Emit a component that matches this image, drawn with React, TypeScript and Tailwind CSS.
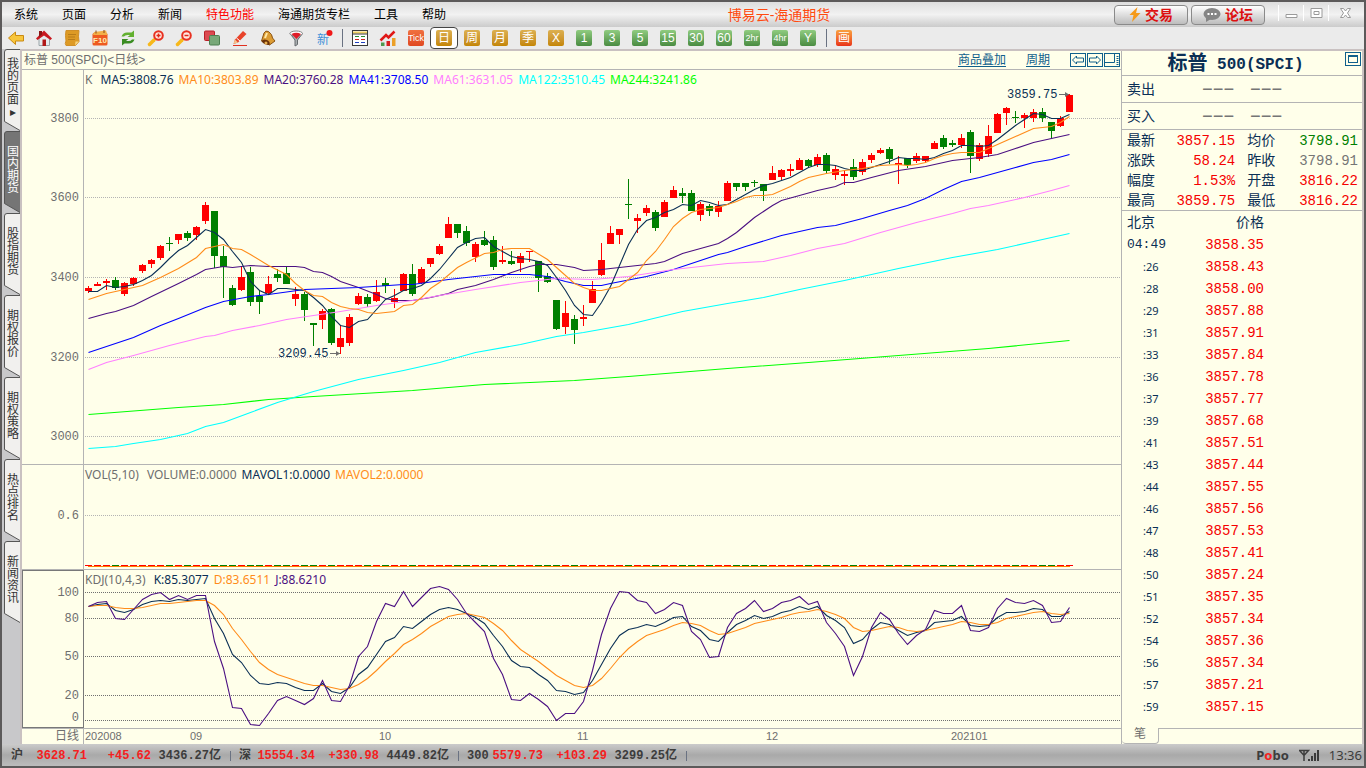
import type { ReactNode } from "react";

/* Horizontal step between two bars and the centre of the first one. */
const STEP = 9;
const FIRST = 4;

const GRAY = "#6e6e6e";
const NAVY = "#0a2f55";
const ORANGE = "#ff8c1a";
const INDIGO = "#4b1082";

type Candle = [high: number, low: number, top: number, bottom: number, up: 0 | 1];
type Point = [index: number, y: number];
type Line = { color: string; points: Point[] };

const candles: Candle[] = [
    [286, 293, 288, 291, 1], [282, 286, 284, 286, 1], [279, 290, 281, 283, 1], [277, 290, 280, 288, 0], [282, 296, 283, 294, 1],
    [277, 286, 278, 284, 1], [264, 273, 265, 271, 1], [259, 268, 260, 264, 1], [245, 260, 246, 258, 1], [237, 251, 243, 244, 0],
    [234, 244, 234, 240, 1], [231, 241, 233, 238, 0], [226, 240, 227, 235, 1], [202, 224, 205, 221, 1], [211, 268, 211, 256, 0],
    [246, 298, 256, 267, 0], [285, 306, 288, 305, 0], [267, 291, 277, 290, 1], [267, 306, 272, 302, 0], [290, 314, 296, 302, 0],
    [276, 294, 284, 293, 1], [269, 282, 274, 278, 0], [266, 284, 273, 284, 0], [287, 306, 294, 299, 1], [292, 321, 294, 310, 0],
    [323, 346, 323, 325, 0], [309, 329, 311, 320, 1], [308, 345, 309, 343, 0], [325, 354, 338, 347, 1], [314, 346, 317, 343, 1],
    [293, 305, 296, 304, 1], [294, 307, 297, 304, 0], [280, 302, 292, 301, 1], [278, 293, 283, 286, 0], [289, 308, 298, 302, 1],
    [273, 291, 274, 291, 1], [264, 296, 274, 294, 0], [267, 284, 269, 283, 1], [258, 267, 258, 264, 1], [244, 255, 246, 254, 1],
    [217, 238, 224, 238, 1], [224, 238, 224, 233, 0], [226, 246, 231, 243, 0], [242, 262, 244, 257, 1], [231, 246, 240, 245, 0],
    [236, 270, 240, 267, 0], [246, 264, 260, 262, 1], [251, 265, 261, 264, 0], [253, 272, 256, 263, 1], [251, 262, 251, 252, 1],
    [261, 292, 261, 278, 0], [273, 283, 276, 282, 0], [300, 330, 300, 329, 0], [301, 334, 313, 327, 1], [315, 344, 319, 330, 0],
    [305, 326, 317, 319, 1], [281, 303, 289, 303, 1], [243, 276, 260, 275, 1], [226, 244, 233, 244, 1], [229, 244, 229, 235, 1],
    [179, 219, 204, 205, 0], [214, 233, 218, 221, 1], [205, 216, 208, 213, 1], [210, 231, 212, 228, 0], [200, 217, 202, 217, 1],
    [186, 198, 190, 198, 1], [188, 203, 193, 196, 0], [190, 211, 193, 211, 0], [202, 221, 204, 215, 1], [204, 216, 206, 211, 0],
    [201, 217, 206, 212, 1], [181, 201, 183, 201, 1], [183, 191, 183, 187, 0], [183, 191, 183, 187, 0], [180, 187, 182, 183, 0],
    [184, 201, 184, 191, 0], [166, 180, 173, 180, 1], [169, 180, 170, 177, 1], [164, 176, 169, 171, 1], [158, 170, 160, 170, 1],
    [159, 168, 160, 166, 0], [154, 167, 157, 165, 1], [153, 174, 155, 171, 0], [166, 180, 169, 175, 1], [171, 185, 174, 176, 1],
    [159, 180, 167, 177, 0], [159, 175, 162, 172, 1], [153, 163, 155, 160, 1], [148, 154, 150, 153, 1], [147, 164, 149, 159, 0],
    [156, 184, 163, 165, 1], [158, 168, 158, 165, 0], [153, 163, 156, 161, 1], [156, 163, 156, 161, 1], [141, 149, 143, 149, 1],
    [135, 149, 138, 147, 0], [140, 147, 143, 145, 0], [134, 148, 138, 145, 1], [130, 173, 132, 156, 0], [143, 161, 145, 159, 1],
    [125, 157, 136, 154, 1], [113, 133, 114, 133, 1], [107, 125, 108, 113, 1], [111, 123, 117, 118, 0], [113, 128, 115, 118, 1],
    [109, 122, 112, 118, 1], [108, 122, 112, 118, 0], [122, 138, 122, 131, 0], [116, 127, 118, 126, 1], [94, 112, 95, 112, 1],
];

/** Turns a plain list of values, one for each bar, into points. */
const dense = (values: number[]): Point[] => values.map((y, i) => [i, y]);

const ma5 = dense([
    291, 291, 285, 287, 286, 284, 280, 275, 267, 258, 250, 245, 237, 229, 232, 239, 251, 262, 281, 290, 294, 288, 288, 289, 290, 297, 305, 316,
    325, 327, 321, 319, 309, 299, 295, 290, 288, 285, 278, 269, 258, 247, 242, 238, 237, 246, 251, 256, 258, 259, 261, 265, 277, 290, 305, 314,
    315, 302, 286, 265, 244, 229, 220, 217, 212, 209, 204, 205, 200, 202, 205, 204, 199, 194, 189, 185, 183, 180, 177, 172, 167, 164, 164, 165,
    168, 170, 170, 167, 164, 161, 157, 158, 158, 159, 157, 153, 150, 145, 145, 146, 145, 139, 132, 125, 119, 113, 114, 118, 118, 114,
]);

const averages: Line[] = [
    {
        color: "#00ff00",
        points: [[0, 414], [10, 407], [15, 404], [20, 399], [25, 396], [36, 390], [44, 384], [54, 380], [60, 376], [71, 368], [80, 362], [90, 355], [100, 348], [109, 340]],
    },
    {
        color: "#00ffff",
        points: [
            [0, 448], [3, 446], [5, 443], [8, 439], [11, 433], [13, 426], [15, 422], [18, 412], [21, 402], [25, 391], [30, 379], [35, 370], [36, 368], [39, 362],
            [43, 352], [48, 344], [52, 336], [55, 332], [60, 324], [66, 311], [71, 303], [75, 297], [79, 289], [84, 280], [90, 268], [96, 257], [101, 249], [105, 241], [109, 233],
        ],
    },
    {
        color: INDIGO,
        points: [
            [0, 318], [2, 313], [3, 311], [5, 305], [7, 296], [10, 283], [12, 274], [13, 269], [15, 266], [16, 267], [18, 265], [20, 266], [23, 266], [24, 267],
            [25, 271], [26, 272], [27, 276], [28, 281], [30, 287], [32, 294], [33, 298], [34, 300], [36, 300], [38, 297], [40, 293], [41, 289], [43, 285], [45, 279],
            [47, 272], [49, 266], [50, 264], [52, 264], [54, 267], [55, 270], [57, 269], [60, 266], [62, 264], [63, 263], [64, 261], [66, 253], [68, 248], [70, 243],
            [71, 238], [72, 232], [74, 217], [76, 205], [77, 200], [79, 195], [81, 190], [83, 186], [84, 182], [85, 182], [87, 177], [90, 170], [93, 166], [96, 160],
            [99, 157], [101, 154], [103, 148], [105, 142], [107, 138], [109, 134],
        ],
    },
    {
        color: "#0000ff",
        points: [
            [0, 352], [2, 346], [5, 337], [8, 325], [10, 318], [13, 307], [15, 301], [18, 296], [20, 294], [24, 289], [30, 287], [35, 284], [36, 284], [40, 279],
            [45, 274], [49, 274], [51, 276], [53, 281], [55, 285], [57, 285], [58, 283], [62, 276], [65, 269], [67, 263], [70, 254], [71, 252], [73, 246], [77, 235],
            [81, 227], [83, 225], [86, 218], [89, 210], [91, 205], [93, 198], [95, 189], [97, 181], [99, 177], [101, 172], [103, 167], [105, 162], [107, 159], [109, 154],
        ],
    },
    {
        color: "#ff80ff",
        points: [
            [0, 369], [2, 362], [5, 355], [9, 345], [13, 336], [14, 335], [16, 330], [19, 325], [22, 319], [25, 315], [28, 311], [32, 305], [36, 300], [39, 295],
            [43, 289], [48, 282], [52, 278], [56, 279], [60, 276], [65, 269], [68, 266], [71, 263], [75, 261], [78, 255], [81, 248], [84, 243], [88, 232], [92, 222],
            [96, 213], [98, 208], [100, 205], [104, 197], [107, 190], [109, 185],
        ],
    },
    { color: NAVY, points: ma5 },
    {
        color: ORANGE,
        points: [
            [0, 299], [2, 293], [4, 289], [6, 285], [8, 277], [10, 268], [12, 257], [13, 248], [14, 246], [15, 244], [16, 248], [17, 249], [18, 254], [20, 265],
            [22, 274], [23, 283], [24, 290], [25, 295], [26, 296], [27, 302], [28, 306], [29, 308], [30, 309], [31, 312], [32, 313], [34, 311], [35, 305], [36, 304],
            [37, 297], [38, 288], [39, 282], [41, 267], [42, 262], [44, 253], [45, 252], [46, 249], [47, 248], [49, 248], [51, 259], [52, 267], [53, 275], [54, 283],
            [55, 287], [56, 290], [57, 290], [59, 286], [60, 279], [61, 272], [62, 260], [63, 251], [64, 239], [65, 226], [66, 218], [67, 212], [68, 209], [69, 208],
            [70, 207], [71, 204], [72, 201], [73, 197], [74, 195], [75, 195], [76, 194], [77, 190], [78, 186], [79, 181], [80, 177], [82, 173], [84, 170], [86, 168],
            [88, 165], [90, 164], [91, 165], [92, 164], [93, 162], [94, 158], [95, 155], [96, 153], [97, 152], [99, 152], [100, 148], [101, 144], [103, 136], [105, 128],
            [107, 126], [108, 122], [109, 116],
        ],
    },
];

const kdj: Line[] = [
    {
        color: NAVY,
        points: dense([
            606, 604, 603, 610, 612, 609, 604, 601, 600, 601, 599, 600, 599, 598, 618, 633, 654, 662, 675, 683, 684, 682, 683, 687, 690, 690, 683, 691,
            693, 687, 674, 667, 654, 641, 637, 626, 628, 621, 614, 609, 607, 609, 613, 617, 623, 635, 646, 660, 666, 667, 674, 680, 690, 691, 694, 692,
            680, 664, 648, 635, 629, 627, 624, 626, 622, 617, 616, 626, 630, 639, 641, 632, 624, 620, 615, 618, 616, 612, 610, 606, 609, 606, 615, 620,
            627, 643, 639, 629, 622, 624, 630, 635, 632, 630, 622, 621, 620, 616, 625, 626, 625, 617, 612, 612, 611, 608, 609, 616, 616, 611,
        ]),
    },
    {
        color: ORANGE,
        points: dense([
            606, 605, 605, 607, 608, 608, 607, 605, 603, 603, 602, 601, 600, 600, 605, 614, 628, 639, 651, 662, 669, 674, 677, 680, 683, 685, 685, 687,
            689, 688, 684, 678, 670, 661, 653, 644, 639, 633, 626, 621, 616, 614, 613, 615, 617, 623, 630, 640, 649, 655, 661, 668, 675, 680, 685, 687,
            685, 678, 668, 657, 648, 641, 635, 632, 629, 625, 622, 623, 625, 630, 634, 633, 630, 627, 623, 621, 619, 617, 614, 612, 611, 609, 611, 614,
            618, 627, 631, 630, 628, 626, 627, 630, 631, 630, 628, 626, 624, 621, 622, 624, 624, 622, 618, 616, 614, 612, 611, 613, 614, 613,
        ]),
    },
    {
        color: INDIGO,
        points: dense([
            606, 602, 601, 618, 619, 609, 599, 594, 592, 599, 595, 599, 595, 595, 641, 668, 707, 708, 724, 725, 713, 700, 696, 700, 704, 698, 680, 700,
            701, 685, 656, 646, 621, 603, 606, 591, 606, 597, 588, 586, 589, 599, 613, 622, 631, 658, 674, 699, 700, 693, 699, 706, 720, 713, 713, 701,
            670, 634, 608, 591, 592, 600, 602, 613, 609, 602, 605, 631, 639, 657, 656, 627, 613, 608, 600, 611, 608, 602, 600, 596, 604, 601, 622, 633,
            646, 675, 656, 627, 612, 619, 633, 644, 635, 629, 610, 613, 613, 605, 630, 631, 627, 608, 598, 602, 603, 600, 605, 622, 621, 607,
        ]),
    },
];

const ticks = [
    ["04:49", "3858.35"], [":26", "3858.43"], [":28", "3858.00"], [":29", "3857.88"], [":31", "3857.91"], [":33", "3857.84"],
    [":36", "3857.78"], [":37", "3857.77"], [":39", "3857.68"], [":41", "3857.51"], [":43", "3857.44"], [":44", "3857.55"],
    [":46", "3857.56"], [":47", "3857.53"], [":48", "3857.41"], [":50", "3857.24"], [":51", "3857.35"], [":52", "3857.34"],
    [":54", "3857.36"], [":56", "3857.34"], [":57", "3857.21"], [":59", "3857.15"],
];

const quotes = [
    ["最新", "3857.15", "均价", "3798.91", "text-[#008000]"],
    ["涨跌", "58.24", "昨收", "3798.91", "text-[#757575]"],
    ["幅度", "1.53%", "开盘", "3816.22", "text-[#f50000]"],
    ["最高", "3859.75", "最低", "3816.22", "text-[#f50000]"],
];

const mono = "font-['Liberation_Mono','Noto_Sans_CJK_SC',monospace]";
const label = "font-['Noto_Sans','Noto_Sans_CJK_SC',sans-serif]";

/* ---------- charts ---------- */

function GridLine({ y, color = "#b4b4b4" }: { y: number; color?: string }) {
    return <line x1="1" x2="100%" y1={y + 0.5} y2={y + 0.5} stroke={color} strokeDasharray="1 1" shapeRendering="crispEdges" />;
}

function Curves({ lines }: { lines: Line[] }) {
    return (
        <>
            {lines.map((line, i) => (
                <polyline
                    key={i}
                    fill="none"
                    stroke={line.color}
                    strokeWidth="1.1"
                    points={line.points.map(([index, y]) => `${FIRST + index * STEP + 0.5},${y + 0.5}`).join(" ")}
                />
            ))}
        </>
    );
}

/** Text mark with a small arrow that points at a bar's high or low. */
function Mark({ x, y, text }: { x: number; y: number; text: string }) {
    return (
        <g>
            <text x={x} y={y + 4} fill={NAVY} className={`${mono} text-[12px]`}>{text}</text>
            <path d={`M${x + 52} ${y + 0.5}h10`} stroke={GRAY} />
            <path d={`M${x + 58} ${y - 2}l4 2.5l-4 2.5z`} fill={GRAY} />
        </g>
    );
}

type PaneProps = {
    axis: [text: string, y: number][];
    framed?: boolean;
    legend: [text: string, color: string][];
    height: string;
    children: ReactNode;
};

/** One chart row: value axis on the left, legend and plot on the right. */
function Pane({ axis, framed, legend, height, children }: PaneProps) {
    return (
        <div className="flex border-b border-[#b4b4b4]">
            <div className={`w-[62px] shrink-0 ${framed ? "outline-1 -outline-offset-1 outline-[#787878]" : "border-r border-[#b4b4b4]"}`}>
                <svg className="block h-5 w-full overflow-visible">
                    {axis.map(([text, y]) => (
                        <text key={text} x="57" y={y + 4} textAnchor="end" fill={GRAY} className={`${mono} text-[12px]`}>{text}</text>
                    ))}
                </svg>
            </div>
            <div className="min-w-0 flex-1">
                <div className={`flex h-5 items-center gap-[5px] whitespace-pre pl-px text-xs ${label}`}>
                    {legend.map(([text, color]) => (
                        <span key={text} style={{ color }}>{text}</span>
                    ))}
                </div>
                <svg className={`block w-full overflow-visible ${height}`}>{children}</svg>
            </div>
        </div>
    );
}

function ChartArea() {
    return (
        <div className="min-w-0 flex-1 border-r border-[#b4b4b4]">
            <div className="flex h-[19px] items-center border-b border-[#b4b4b4] pl-0.5 text-xs text-[#6e6e6e]">
                <h2 className="flex-1">标普 500(SPCI)&lt;日线&gt;</h2>
                <a href="#overlay" className="text-[#10608c] underline underline-offset-2">商品叠加</a>
                <a href="#period" className="ml-5 text-[#10608c] underline underline-offset-2">周期</a>
                <div className="ml-5 flex gap-px pr-px">
                    <button aria-label="上一个"><BoxIcon d="M2.500 7l4-4v2h7v4h-7v2z" /></button>
                    <button aria-label="下一个"><BoxIcon d="M13.500 7l-4-4v2h-7v4h7v2z" /></button>
                    <button aria-label="布局"><BoxIcon d="M1 9.500H10.500V1M12.500 3.500h2M12.500 5.500h2M12.500 7.500h2M12.500 9.500h2M12.500 11.500h2" /></button>
                </div>
            </div>

            {/* Candles and moving averages */}
            <Pane
                axis={[["3800", 48], ["3600", 127], ["3400", 207], ["3200", 287], ["3000", 366]]}
                legend={[
                    ["K ", GRAY], ["MA5:3808.76", NAVY], ["MA10:3803.89", ORANGE], ["MA20:3760.28", INDIGO], ["MA41:3708.50", "#0000ff"],
                    ["MA61:3631.05", "#ff80ff"], ["MA122:3510.45", "#00ffff"], ["MA244:3241.86", "#00ff00"],
                ]}
                height="h-[374px]"
            >
                <g transform="translate(0 -90)">
                    {[118, 197, 277, 357, 436].map((y) => <GridLine key={y} y={y} />)}
                    {candles.map(([high, low, top, bottom, up], i) => (
                        <g key={i} fill={up ? "#ff0000" : "#008000"} shapeRendering="crispEdges">
                            <rect x={FIRST + i * STEP} y={high} width="1" height={low - high} />
                            <rect x={FIRST + i * STEP - 3} y={top} width="7" height={bottom - top} />
                        </g>
                    ))}
                    <Curves lines={averages} />
                    <Mark x={194} y={353} text="3209.45" />
                    <Mark x={923} y={94} text="3859.75" />
                </g>
            </Pane>

            {/* Volume */}
            <Pane
                axis={[["0.6", 50]]}
                legend={[["VOL(5,10) ", GRAY], ["VOLUME:0.0000", GRAY], ["MAVOL1:0.0000", NAVY], ["MAVOL2:0.0000", ORANGE]]}
                height="h-[84px]"
            >
                <GridLine y={30} />
                {candles.map((c, i) => (
                    <rect key={i} x={FIRST + i * STEP - 3} y="80" width="7" height="1" fill={c[4] ? "#ff0000" : "#008000"} />
                ))}
                <rect x="4" y="81" width="982" height="1" fill="#ff8000" />
            </Pane>

            {/* KDJ */}
            <Pane
                framed
                axis={[["100", 22], ["80", 48], ["50", 86], ["20", 125], ["0", 147]]}
                legend={[["KDJ(10,4,3) ", GRAY], ["K:85.3077", NAVY], ["D:83.6511", ORANGE], ["J:88.6210", INDIGO]]}
                height="h-[138px]"
            >
                <g transform="translate(0 -590)">
                    {[592, 618, 656, 695, 720].map((y) => <GridLine key={y} y={y} color="#707070" />)}
                    <Curves lines={kdj} />
                </g>
            </Pane>

            {/* Time axis */}
            <div className="flex h-[15px] text-xs leading-[15px] text-[#6e6e6e]">
                <div className="w-[62px] border-r border-[#b4b4b4] pr-1 text-right">日线</div>
                <svg className="h-full flex-1 text-[11px]" fill={GRAY}>
                    <text x="1" y="11">202008</text>
                    <text x="106" y="11">09</text>
                    <text x="295" y="11">10</text>
                    <text x="493" y="11">11</text>
                    <text x="682" y="11">12</text>
                    <text x="867" y="11">202101</text>
                </svg>
            </div>
        </div>
    );
}

function BoxIcon({ d }: { d: string }) {
    return (
        <svg width="16" height="14" viewBox="0 0 16 14" fill="none" stroke="#10608c" className="block">
            <rect x="0.5" y="0.5" width="15" height="13" />
            <path d={d} />
        </svg>
    );
}

/* ---------- side panel ---------- */

function QuotePanel() {
    return (
        <aside className={`flex w-60 shrink-0 flex-col text-sm text-[#0a2f55] ${mono}`}>
            <div className="flex h-[25px] border-b border-[#b4b4b4]">
                <h1 className="flex flex-1 items-center justify-center whitespace-pre pt-1 pl-1 font-bold">
                    <span className="text-xl leading-5">标普</span>
                    <span className="text-base leading-5"> 500(SPCI)</span>
                </h1>
                <button aria-label="最大化面板" className="mr-px mt-px self-start">
                    <svg width="16" height="14" viewBox="0 0 16 14" fill="none" stroke="#10608c" className="block">
                        <rect x="0.5" y="0.5" width="15" height="13" />
                        <rect x="3.5" y="3.5" width="9" height="7" />
                        <path d="M3 4.500h10" />
                    </svg>
                </button>
            </div>
            {["卖出", "买入"].map((side) => (
                <div key={side} className="flex h-[27px] items-center border-b border-[#b4b4b4] pt-0.5 pl-[5px]">
                    <span className="w-[75px]">{side}</span>
                    <span className="w-12 text-lg text-[#757575]">−−−</span>
                    <span className="text-lg text-[#757575]">−−−</span>
                </div>
            ))}
            <table className="w-full border-b border-[#b4b4b4]">
                <tbody>
                    {quotes.map(([a, av, b, bv, tone]) => (
                        <tr key={a} className="h-5 leading-[18px]">
                            <th scope="row" className="pt-0.5 pl-[5px] text-left font-normal">{a}</th>
                            <td className="pt-0.5 text-right text-[#f50000]">{av}</td>
                            <th scope="row" className="pt-0.5 pl-3 text-left font-normal">{b}</th>
                            <td className={`pt-0.5 pr-1 text-right ${tone}`}>{bv}</td>
                        </tr>
                    ))}
                </tbody>
            </table>
            <table className="w-full">
                <thead>
                    <tr className="h-[23px]">
                        <th className="w-10 pl-[5px] text-left font-normal whitespace-nowrap">北京</th>
                        <th className="pr-[98px] text-right font-normal">价格</th>
                    </tr>
                </thead>
                <tbody>
                    {ticks.map(([time, price], i) => (
                        <tr key={time} className="h-[22px] leading-[22px]">
                            <td className={i === 0 ? "pl-[5px] text-[13px]" : `pl-[21px] text-[11px] ${label}`}>{time}</td>
                            <td className="pr-[98px] text-right text-[#f50000]">{price}</td>
                        </tr>
                    ))}
                </tbody>
            </table>
            <div className="mt-auto flex h-4 text-xs leading-[15px] text-[#6e6e6e]">
                <button className="w-[37px] rounded-b-sm border-r border-b border-[#b4b4b4]">笔</button>
                <div className="flex-1 border-t border-[#b4b4b4]" />
            </div>
        </aside>
    );
}

/* ---------- left tabs ---------- */

const pages = ["我的页面▸", "国内期货", "股指期货", "期权报价", "期权策略", "热点排名", "新闻资讯"];

function PageTabs() {
    return (
        <nav className="w-[18px] shrink-0 bg-[#c8c8ca]">
            {pages.map((page, i) => (
                <button key={page} className={`relative block h-[82px] w-full text-xs leading-[12px] ${i === 1 ? "text-white" : "text-[#333]"}`}>
                    <svg width="18" height="82" className="absolute inset-0" fill={i === 1 ? "#757575" : "#f1f0ee"} stroke="#555">
                        <path d="M18 0.500H5Q2.500 0.500 2.500 3V72.500L18 81.500" />
                    </svg>
                    <span className="relative flex flex-col items-center pb-1 pl-1">
                        {[...page].map((char) => <span key={char}>{char}</span>)}
                    </span>
                </button>
            ))}
        </nav>
    );
}

/* ---------- toolbar ---------- */

const tools: [string, ReactNode][] = [
    ["后退", <path d="M0.500 8L7.500 2v3.500h8v5.500h-8V14.500z" fill="#f8c63c" stroke="#c98a12" />],
    ["主页", <><path d="M3 8v7.500h10.500V8L8 3z" fill="#e4eaec" stroke="#9aa5a8" /><path d="M0 8.500L8 0.500l8 8-1.500 1.500L8 5.500 1.500 10z" fill="#c81820" /><path d="M3 1h3v3.500L3 7z" fill="#8a1414" /><path d="M6.500 9.500H10V16H6.500z" fill="#b01818" /></>],
    ["公告", <><path d="M2 0.500h13q-1 6 0 11l-3.500 4H2q-1.500-2 0-4.500q-1-6 0-10.500z" fill="#dd9a25" stroke="#d08f28" /><path d="M4 4.500h8M4 7h7M4 9.500h7" stroke="#b87c1a" /><path d="M11 15.500l0.500-4h3.500z" fill="#f8d580" /></>],
    ["F10", <><rect x="0.500" y="3" width="15" height="12.500" rx="1.500" fill="#ee5a20" /><path d="M1 5l1-3 12-1.500 1.500 4.500z" fill="#f2b048" /><path d="M4 0.500v3M12 0v3" stroke="#8a4a18" /><text x="8" y="13" textAnchor="middle" fontSize="8" fontWeight="bold" fill="#ffe9b0">F10</text></>],
    ["刷新", <><path d="M1.500 6.500Q3 2.500 7 2.500h4.500L14 0.500v6.500H7.500L10 5H7.500Q5 5 4 6.500z" fill="#62b030" /><path d="M14.500 9.500Q13 13.500 9 13.500H4.500L2 15.500V9h6.500L6 11h2.500q2.500 0 3.500-1.500z" fill="#3a8c22" /></>],
    ["放大", <><path d="M1.500 14.500L6 10" stroke="#f7b81a" strokeWidth="3.500" strokeLinecap="round" /><circle cx="10.500" cy="5.500" r="4.300" fill="#ffe8e0" stroke="#e83020" strokeWidth="2" /><path d="M8.500 5.500h4M10.500 3.500v4" stroke="#e02818" strokeWidth="1.500" /></>],
    ["缩小", <><path d="M1.500 14.500L6 10" stroke="#f7b81a" strokeWidth="3.500" strokeLinecap="round" /><circle cx="10.500" cy="5.500" r="4.300" fill="#ffe8e0" stroke="#e83020" strokeWidth="2" /><path d="M8.500 5.500h4" stroke="#e02818" strokeWidth="1.500" /></>],
    ["叠加", <><rect x="0.500" y="1" width="10" height="9.500" rx="1" fill="#dc4a50" stroke="#b82028" /><rect x="5.500" y="5.500" width="10" height="9.500" rx="1" fill="#78a878" stroke="#4d8050" /></>],
    ["画线", <><path d="M1 15.500h14" stroke="#e03020" /><path d="M1.500 14l1.500-4.500L11 1l3.500 3-8.500 8.500z" fill="#e8432a" /><path d="M1.500 14l1.500-4.500 3 3z" fill="#f3c38a" /><path d="M4.500 8l3.500 3" stroke="#fff" /></>],
    ["预警", <><path d="M1.500 11L4 3Q5.500 0 8.500 1.500q4 3 4 6.500l2.500 3-5.500 4z" fill="#dc9c34" stroke="#8a5414" /><path d="M1.500 11q2-2.500 5.500-1t2.500 5q-6 0-8-4z" fill="#6b3208" /><path d="M5 8l2-5" stroke="#ffe9a8" strokeWidth="2" /><circle cx="6" cy="13" r="1.500" fill="#e8b050" /></>],
    ["筛选", <><path d="M2 3.500L7 10v6l2.500-1.500V10L14.500 3.500z" fill="#a9aeb0" stroke="#666b6e" /><ellipse cx="8.200" cy="3.500" rx="6.300" ry="2.500" fill="#fff" stroke="#888" /><path d="M3.500 4q4.700-2.500 9.500 0L8.500 9z" fill="#e01c28" /></>],
    ["新", <><text x="7" y="13.500" textAnchor="middle" fontSize="12" fill="#4090d8">新</text><circle cx="13.500" cy="3" r="3" fill="#f01818" /></>],
];

const views: [string, ReactNode][] = [
    ["报价", <><rect x="0.500" y="0.500" width="15" height="15" fill="#fff" stroke="#3a3a3a" /><path d="M1 2.500h14" stroke="#f0d060" strokeWidth="2" /><path d="M1 4h14" stroke="#3a3a3a" /><path d="M3 6.500h4M9 6.500h4" stroke="#2c8c2c" /><path d="M3 9.500h4M9 9.500h4" stroke="#d02020" /><path d="M3 12.500h4M9 12.500h4" stroke="#2040c0" /></>],
    ["走势", <><path d="M1 16v-3.500h3.500V16z" fill="#4e9a4e" /><path d="M6.500 16v-5H10v5z" fill="#d82020" /><path d="M12 16V8h3.500v8z" fill="#eca028" /><path d="M0.500 10.500L6 5l2.500 2.500 6-6" fill="none" stroke="#e01818" strokeWidth="2.500" /></>],
];

const periods = ["日", "周", "月", "季", "X", "1", "3", "5", "15", "30", "60", "2hr", "4hr", "Y"];

function ToolButton({ name, children }: { name: string; children: ReactNode }) {
    return (
        <button aria-label={name} className="flex h-[22px] w-7 items-center justify-center">
            <svg width="16" height="16" viewBox="0 0 16 16" fill="none" className="overflow-visible">{children}</svg>
        </button>
    );
}

function Badge({ text, tone }: { text: string; tone: string }) {
    return (
        <span className={`flex size-4 items-center justify-center rounded-xs bg-linear-to-b leading-4 text-white ${tone} ${text.length > 2 ? "text-[9px]" : "text-xs"}`}>
            {text}
        </span>
    );
}

function Separator() {
    return <span className="flex w-2 justify-center"><span className="h-[18px] w-px bg-gray-500" /></span>;
}

function Toolbar() {
    return (
        <div className="flex h-[22px] items-center bg-[#ebebeb]">
            {tools.map(([name, icon]) => <ToolButton key={name} name={name}>{icon}</ToolButton>)}
            <Separator />
            {views.map(([name, icon]) => <ToolButton key={name} name={name}>{icon}</ToolButton>)}
            <button className="flex h-[22px] w-7 items-center justify-center"><Badge text="Tick" tone="from-[#f07040] to-[#e04820]" /></button>
            {periods.map((period, i) => (
                <button
                    key={period}
                    className={`flex h-[22px] w-7 items-center justify-center ${i === 0 ? "rounded-sm border border-[#444] bg-white" : ""}`}
                >
                    <Badge text={period} tone={i < 5 ? "from-[#dcb050] to-[#c48600]" : "from-[#90cc80] to-[#4a8c42]"} />
                </button>
            ))}
            <Separator />
            <button className="flex h-[22px] w-7 items-center justify-center"><Badge text="画" tone="from-[#f8a040] to-[#e83018]" /></button>
        </div>
    );
}

/* ---------- title bar ---------- */

const menus = ["系统", "页面", "分析", "新闻", "特色功能", "海通期货专栏", "工具", "帮助"];

function TitleBar() {
    const pill = "flex h-5 w-[74px] items-center justify-center gap-1 rounded-sm border border-[#8a8a8a] bg-linear-to-b from-white to-[#bdbdbd] text-sm font-bold text-[#dd1010]";
    return (
        <header className="grid h-[25px] grid-cols-[1fr_auto_1fr] items-center bg-linear-to-b from-[#dedede] via-[#f2f2f2] to-[#cbcbcb]">
            <nav className="flex gap-6 whitespace-nowrap pl-3 text-xs">
                {menus.map((menu) => (
                    <button key={menu} className={menu === "特色功能" ? "text-[#ff0000]" : "text-black"}>{menu}</button>
                ))}
            </nav>
            <div className="pl-48 text-sm text-[#ff4a10]">博易云-海通期货</div>
            <div className="flex items-center justify-end gap-[3px] pr-0.5">
                <button className={pill}>
                    <svg width="12" height="15" viewBox="0 0 12 15"><path d="M8.500 0L0.500 8h4L3 15l8.500-9H7z" fill="#f59a1a" /></svg>
                    交易
                </button>
                <button className={pill}>
                    <svg width="18" height="14" viewBox="0 0 18 14">
                        <ellipse cx="9" cy="6" rx="8.500" ry="6" fill="#858585" />
                        <path d="M3 9l0 5 5-3z" fill="#858585" />
                        <path d="M4.500 5h2v2h-2zM8 5h2v2H8zM11.500 5h2v2h-2z" fill="#fff" />
                    </svg>
                    论坛
                </button>
                <div className="ml-2.5 flex self-start">
                    <WindowButton name="最小化" width="w-[25px]"><path d="M1 7.500h11v3H1z" /></WindowButton>
                    <WindowButton name="还原" width="w-[25px]"><path d="M1 1.500h11v9H1zM4 4.500h5v3H4z" /></WindowButton>
                    <WindowButton name="关闭" width="w-[34px]"><path d="M1.500 1.500h3l2 2.500 2-2.500h3L8.500 6l3 4.500h-3l-2-2.500-2 2.500h-3l3-4.500z" /></WindowButton>
                </div>
            </div>
        </header>
    );
}

function WindowButton({ name, width, children }: { name: string; width: string; children: ReactNode }) {
    return (
        <button aria-label={name} className={`flex h-4 items-center justify-center border-l border-white ${width}`}>
            <svg width="13" height="12" viewBox="0 0 13 12" fill="#fff" stroke="#9a9a9a">{children}</svg>
        </button>
    );
}

/* ---------- status bar ---------- */

const indexes = [
    ["沪", "3628.71", "+45.62", "3436.27亿"],
    ["深", "15554.34", "+330.98", "4449.82亿"],
    ["300", "5579.73", "+103.29", "3299.25亿"],
];

function StatusBar() {
    return (
        <footer className={`flex h-[22px] items-center bg-linear-to-b from-[#cbcbcb] via-[#a9a9a9] to-[#bcbcbc] pt-0.5 pl-[9px] text-xs font-bold text-[#3c3c3c] ${mono}`}>
            {indexes.map(([name, price, change, amount]) => (
                <div key={name} className="flex items-center">
                    <span className="flex w-[76px] justify-between">
                        <span>{name}</span>
                        <span className="text-[#f52020]">{price}</span>
                    </span>
                    <span className="w-16 text-right text-[#f52020]">{change}</span>
                    <span className="w-[70px] text-right">{amount}</span>
                    <span className="flex w-[18px] justify-center"><span className="h-2.5 w-px bg-gray-500" /></span>
                </div>
            ))}
            <div className={`ml-auto flex items-center gap-2.5 pr-0.5 ${label}`}>
                <span className="text-[13px]">P<span className="text-[#f52020]">o</span>bo</span>
                <svg width="20" height="14" viewBox="0 0 20 14" fill="none" stroke="#3c3c3c">
                    <path d="M0.500 1.500h9L5 6.500zM5 1v11" strokeWidth="1.500" />
                    <path d="M9 12h2v-2H9zM12 12h2V7h-2zM15 12h2V4h-2zM18 12h2V1h-2z" fill="#3c3c3c" stroke="none" />
                </svg>
                <span className="text-[13px] font-normal">13:36</span>
            </div>
        </footer>
    );
}

export default function App() {
    return (
        <div className="flex min-h-screen flex-col border-2 border-[#5c5a5a] bg-[#c8c8ca] font-['Liberation_Sans','Noto_Sans_CJK_SC',sans-serif]">
            <TitleBar />
            <Toolbar />
            <main className="flex flex-1">
                <PageTabs />
                <div className="flex min-w-0 flex-1 border-x-2 border-t-2 border-[#c9c1c1] bg-[#ffffea]">
                    <ChartArea />
                    <QuotePanel />
                </div>
            </main>
            <StatusBar />
        </div>
    );
}
